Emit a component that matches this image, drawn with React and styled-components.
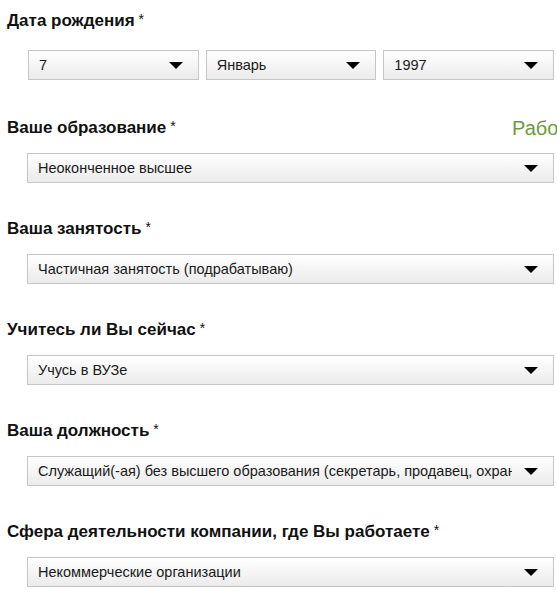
import React from "react";
import styled, { createGlobalStyle } from "styled-components";

const Global = createGlobalStyle`
  html, body { margin: 0; padding: 0; background: #fff; overflow: hidden; }
  body { font-family: "Liberation Sans", Arial, sans-serif; color: #000; }
`;

const Form = styled.div`
  width: 557px;
  padding: 11px 0 0 7px;
  box-sizing: border-box;
  display: flex;
  flex-direction: column;
`;

const Section = styled.div`
  display: flex;
  flex-direction: column;
  margin-bottom: ${(p) => p.$after ?? 37}px;
`;

const LabelRow = styled.div`
  display: flex;
  align-items: center;
  height: 18px;
  padding-top: 1px;
  white-space: nowrap;
  margin-bottom: ${(p) => p.$gap ?? 16}px;
`;

const Label = styled.div`
  font-size: 17px;
  line-height: 18px;
  font-weight: bold;
  color: #111;
`;

const Star = styled.span`
  font-weight: normal;
  font-size: 14px;
  line-height: 1;
  margin-left: 4px;
  position: relative;
  top: -2px;
`;

const Aside = styled.div`
  margin-left: auto;
  width: 45px;
  overflow: hidden;
  font-size: 20px;
  line-height: 18px;
  color: #6b9c3e;
`;

const SelectRow = styled.div`
  display: flex;
  gap: 7px;
  padding-left: ${(p) => p.$indent ?? 20}px;
  padding-right: 3px;
`;

const Select = styled.div`
  flex: 1 1 0;
  min-width: 0;
  height: 30px;
  box-sizing: border-box;
  border: 1px solid #c6c6c6;
  background: linear-gradient(#ffffff, #ebebeb);
  display: flex;
  align-items: center;
  padding: 0 15px 0 10px;
  font-size: 14.5px;
  color: #1a1a1a;
  white-space: nowrap;
  overflow: hidden;
`;

const Value = styled.span`
  flex: 1;
  min-width: 0;
  overflow: hidden;
`;

const Arrow = styled.svg`
  flex: none;
  margin-left: 12px;
`;

const Caret = () => (
  <Arrow width="14" height="7" viewBox="0 0 14 7">
    <polygon points="0,0 14,0 7,7" fill="#000" />
  </Arrow>
);

const Dropdown = ({ value }) => (
  <Select>
    <Value>{value}</Value>
    <Caret />
  </Select>
);

export default function App() {
  return (
    <>
      <Global />
      <Form>
        <Section $after={38}>
          <LabelRow $gap={20}>
            <Label>
              Дата рождения<Star>*</Star>
            </Label>
          </LabelRow>
          <SelectRow $indent={21}>
            <Dropdown value="7" />
            <Dropdown value="Январь" />
            <Dropdown value="1997" />
          </SelectRow>
        </Section>
        <Section $after={36}>
          <LabelRow>
            <Label>
              Ваше образование<Star>*</Star>
            </Label>
            <Aside>Работа</Aside>
          </LabelRow>
          <SelectRow>
            <Dropdown value="Неоконченное высшее" />
          </SelectRow>
        </Section>
        <Section $after={36}>
          <LabelRow>
            <Label>
              Ваша занятость<Star>*</Star>
            </Label>
          </LabelRow>
          <SelectRow>
            <Dropdown value="Частичная занятость (подрабатываю)" />
          </SelectRow>
        </Section>
        <Section $after={36}>
          <LabelRow>
            <Label>
              Учитесь ли Вы сейчас<Star>*</Star>
            </Label>
          </LabelRow>
          <SelectRow>
            <Dropdown value="Учусь в ВУЗе" />
          </SelectRow>
        </Section>
        <Section $after={36}>
          <LabelRow>
            <Label>
              Ваша должность<Star>*</Star>
            </Label>
          </LabelRow>
          <SelectRow>
            <Dropdown value="Служащий(-ая) без высшего образования (секретарь, продавец, охранник)" />
          </SelectRow>
        </Section>
        <Section>
          <LabelRow>
            <Label>
              Сфера деятельности компании, где Вы работаете<Star>*</Star>
            </Label>
          </LabelRow>
          <SelectRow>
            <Dropdown value="Некоммерческие организации" />
          </SelectRow>
        </Section>
      </Form>
    </>
  );
}
